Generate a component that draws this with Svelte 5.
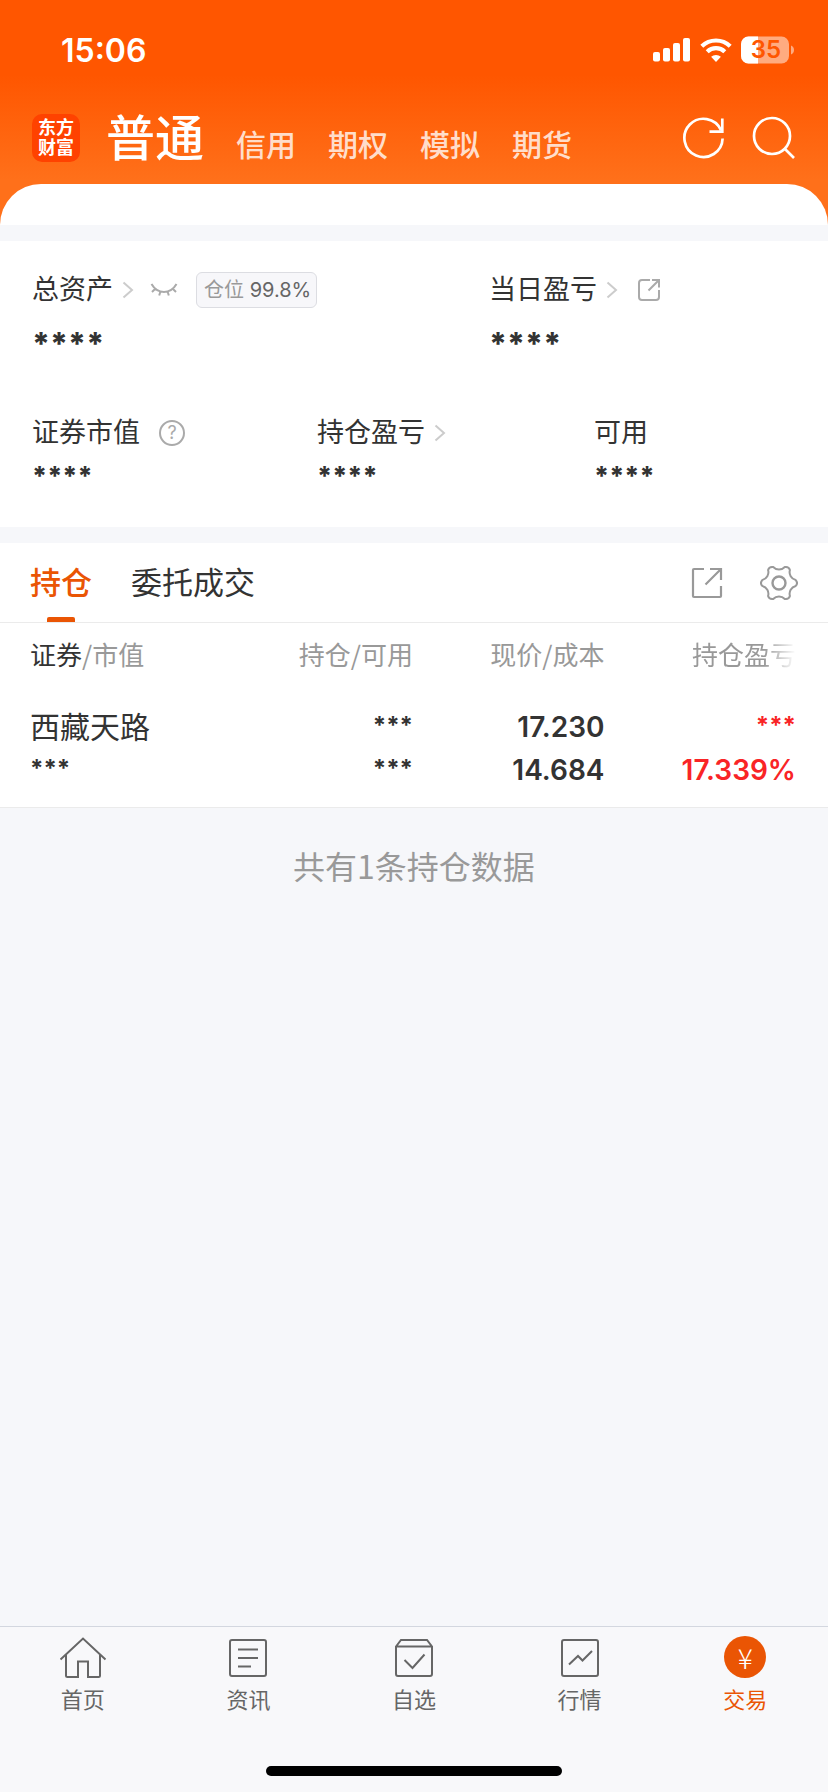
<script>
    const markets = ["信用", "期权", "模拟", "期货"];

    const columns = ["证券/市值", "持仓/可用", "现价/成本"];

    const holdings = [
        {
            name: "西藏天路",
            value: "***",
            amount: "***",
            available: "***",
            price: "17.230",
            cost: "14.684",
            profit: "***",
            profitRate: "17.339%"
        }
    ];

    const navItems = [
        { id: "home", label: "首页" },
        { id: "news", label: "资讯" },
        { id: "watch", label: "自选" },
        { id: "quotes", label: "行情" },
        { id: "trade", label: "交易" }
    ];

    let activeTab = $state("holdings");
    let activeNav = $state("trade");

    // six teeth with a shallow round valley between each pair
    function gearPath(c, r) {
        let d = "";
        for (let i = 0; i < 6; i++) {
            const points = [i * 60 - 10, i * 60 + 10].map((deg) => {
                const a = deg * Math.PI / 180;
                return `${(c + r * Math.cos(a)).toFixed(2)} ${(c + r * Math.sin(a)).toFixed(2)}`;
            });
            d += i === 0 ? `M${points[0]}` : `A8 8 0 0 0 ${points[0]}`;
            d += `A4.5 4.5 0 0 1 ${points[1]}`;
        }
        const a = -10 * Math.PI / 180;
        return d + `A8 8 0 0 0 ${(c + r * Math.cos(a)).toFixed(2)} ${(c + r * Math.sin(a)).toFixed(2)}Z`;
    }
</script>

{#snippet chevron()}
    <svg class="chevron" width="12" height="18" viewBox="0 0 12 18"><path d="M1.500 1.500L10 9l-8.500 7.500" /></svg>
{/snippet}

{#snippet cell(text)}
    <div class:masked={text === "***"}>{text}</div>
{/snippet}

<div class="app">
    <header>
        <div class="status">
            <span class="time">15:06</span>
            <div class="status-icons">
                <svg width="38" height="24" viewBox="0 0 38 24" fill="#fff">
                    <rect x="0" y="14" width="7" height="9.500" rx="2" />
                    <rect x="10" y="10" width="7" height="13.500" rx="2" />
                    <rect x="20" y="5" width="7" height="18.500" rx="2" />
                    <rect x="30" y="0" width="7" height="23.500" rx="2" />
                </svg>
                <svg width="32" height="24" viewBox="0 0 32 24">
                    <path d="M1.800 8.200a20.500 20.500 0 0 1 28.400 0M7.200 13.800a12.600 12.600 0 0 1 17.600 0" fill="none" stroke="#fff" stroke-width="4.200" />
                    <path d="M16 24l-4.900-5.200a7.200 7.200 0 0 1 9.800 0z" fill="#fff" />
                </svg>
                <div class="battery">
                    <svg width="54" height="28" viewBox="0 0 54 28">
                        <rect x="0" y="0.500" width="48" height="27" rx="7.500" fill="#fff" fill-opacity="0.500" />
                        <path d="M17 .5H7.500A7.500 7.500 0 0 0 0 8v12a7.500 7.500 0 0 0 7.500 7.500H17z" fill="#fff" />
                        <path d="M50 9.500c4 1.500 4 7.500 0 9z" fill="#fff" fill-opacity="0.500" />
                    </svg>
                    <span>35</span>
                </div>
            </div>
        </div>
        <div class="topbar">
            <a class="logo" href="#home"><span>东方</span><span>财富</span></a>
            <nav class="markets">
                <a class="current" href="#normal">普通</a>
                {#each markets as market}
                    <a href="#{market}">{market}</a>
                {/each}
            </nav>
            <button class="icon-button" aria-label="刷新">
                <svg width="44" height="44" viewBox="0 0 44 44" fill="none" stroke="#fff" stroke-width="2.700">
                    <path d="M40.600 22.500A19.100 19.100 0 1 1 38.900 14M40.300 2.500v13.200H27.500" />
                </svg>
            </button>
            <button class="icon-button" aria-label="搜索">
                <svg width="44" height="44" viewBox="0 0 44 44" fill="none" stroke="#fff" stroke-width="2.700">
                    <circle cx="20" cy="20" r="18" />
                    <path d="M33 33l9 9" />
                </svg>
            </button>
        </div>
        <div class="sheet"></div>
    </header>

    <section class="summary">
        <div class="row totals">
            <div class="item">
                <div class="label">
                    <a href="#assets">总资产{@render chevron()}</a>
                    <button class="eye" aria-label="显示金额">
                        <svg width="28" height="16" viewBox="0 0 28 16" fill="none" stroke="#aaa" stroke-width="2">
                            <path d="M1.500 2C7.500 12.500 20.500 12.500 26.500 2M5.500 6.500l-3.500 3.500M10.500 9.300l-1.300 4.200M17.500 9.300l1.300 4.200M22.500 6.500l3.500 3.500" />
                        </svg>
                    </button>
                    <span class="badge">仓位 <b>99.8%</b></span>
                </div>
                <div class="value">****</div>
            </div>
            <div class="item">
                <div class="label">
                    <a href="#today">当日盈亏{@render chevron()}</a>
                    <button class="share" aria-label="分享当日盈亏">
                        <svg width="24" height="24" viewBox="0 0 24 24" fill="none" stroke="#aaa" stroke-width="2">
                            <path d="M13 2H5a3 3 0 0 0-3 3v14a3 3 0 0 0 3 3h14a3 3 0 0 0 3-3v-7M15 2h7v7.500M22 2L11.500 12.500" />
                        </svg>
                    </button>
                </div>
                <div class="value">****</div>
            </div>
        </div>
        <div class="row details">
            <div class="item">
                <div class="label">证券市值<button class="help" aria-label="说明">?</button></div>
                <div class="value">****</div>
            </div>
            <div class="item">
                <div class="label"><a href="#profit">持仓盈亏{@render chevron()}</a></div>
                <div class="value">****</div>
            </div>
            <div class="item">
                <div class="label">可用</div>
                <div class="value">****</div>
            </div>
        </div>
    </section>

    <main>
        <div class="tabs">
            <button class="tab" class:active={activeTab === "holdings"} onclick={() => activeTab = "holdings"}>持仓</button>
            <button class="tab" class:active={activeTab === "orders"} onclick={() => activeTab = "orders"}>委托成交</button>
            <div class="tools">
                <button aria-label="分享持仓">
                    <svg width="32" height="32" viewBox="0 0 32 32" fill="none" stroke="#999" stroke-width="2.200">
                        <path d="M13 2H3a1 1 0 0 0-1 1v26a1 1 0 0 0 1 1h26a1 1 0 0 0 1-1V19M19 2h11v11M30 2L14.500 17.500" />
                    </svg>
                </button>
                <button aria-label="设置">
                    <svg width="38" height="38" viewBox="0 0 38 38" fill="none" stroke="#999" stroke-width="2" stroke-linejoin="round">
                        <path d={gearPath(19, 17)} />
                        <circle cx="19" cy="19" r="6.500" stroke-width="2.400" />
                    </svg>
                </button>
            </div>
        </div>
        <div class="table-wrapper">
            <table>
                <thead>
                    <tr>
                        {#each columns as column, i}
                            {@const [first, second] = column.split("/")}
                            <th scope="col"><span class:dark={i === 0}>{first}</span>/{second}</th>
                        {/each}
                        <th scope="col" class="fade">持仓盈亏</th>
                    </tr>
                </thead>
                <tbody>
                    {#each holdings as item}
                        <tr>
                            <td><div class="name">{item.name}</div>{@render cell(item.value)}</td>
                            <td>{@render cell(item.amount)}{@render cell(item.available)}</td>
                            <td>{@render cell(item.price)}{@render cell(item.cost)}</td>
                            <td class="up">{@render cell(item.profit)}{@render cell(item.profitRate)}</td>
                        </tr>
                    {/each}
                </tbody>
            </table>
        </div>
        <p class="count">共有{holdings.length}条持仓数据</p>
    </main>

    <footer>
        <nav class="bottom-nav">
            {#each navItems as item}
                <a href="#{item.id}" class:active={activeNav === item.id} onclick={() => activeNav = item.id}>
                    {#if item.id === "trade"}
                        <span class="coin">¥</span>
                    {:else}
                        <svg width="48" height="44" viewBox="0 0 48 44" fill="none" stroke="currentColor" stroke-width="2">
                            {#if item.id === "home"}
                                <path d="M1.500 23.500L24 2.500l22.500 21M7 19v20.500a1.500 1.500 0 0 0 1.500 1.500H19V25.500h10V41h10.500a1.500 1.500 0 0 0 1.500-1.500V19" />
                            {:else if item.id === "news"}
                                <rect x="6" y="4" width="36" height="36" rx="2" />
                                <path d="M14 13.500h20M14 22h20M14 30.500h13" />
                            {:else if item.id === "watch"}
                                <path d="M6 10.500L11 4h26l5 6.500V38a2 2 0 0 1-2 2H8a2 2 0 0 1-2-2zM6 10.500h36M14.500 24l8 8 12-13.500" />
                            {:else}
                                <rect x="6" y="4" width="36" height="36" rx="2" />
                                <path d="M13 28.500l9-8.500 4.500 4.500 9.500-9.500" />
                            {/if}
                        </svg>
                    {/if}
                    <span class="nav-label">{item.label}</span>
                </a>
            {/each}
        </nav>
        <div class="home-indicator"></div>
    </footer>
</div>

<style>
    :global(body) {
        margin: 0;
        background: #f6f7fa;
    }

    .app {
        display: flex;
        flex-direction: column;
        min-height: 100vh;
        font-family: Inter, "Noto Sans CJK SC", sans-serif;
        color: #333;
    }

    a {
        color: inherit;
        text-decoration: none;
    }

    button {
        display: flex;
        padding: 0;
        border: none;
        background: none;
        color: inherit;
        font: inherit;
        cursor: pointer;
    }

    svg {
        display: block;
        flex: none;
    }

    header {
        background: linear-gradient(#ff5600 75px, #ff701a 180px);
        color: #fff;
    }

    .status {
        display: flex;
        align-items: center;
        justify-content: space-between;
        height: 100px;
        padding: 0 33px 0 61px;
    }

    .time {
        font-size: 32px;
        font-weight: 600;
    }

    .status-icons {
        display: flex;
        align-items: center;
        gap: 9px;
    }

    .battery {
        position: relative;
    }

    .battery span {
        position: absolute;
        top: 0;
        left: 0;
        width: 50px;
        color: #ff5600;
        font-size: 24px;
        font-weight: 600;
        line-height: 28px;
        text-align: center;
    }

    .topbar {
        display: flex;
        align-items: center;
        gap: 26px;
        height: 76px;
        padding: 0 32px 8px;
    }

    .logo {
        display: flex;
        flex-direction: column;
        align-items: center;
        justify-content: center;
        width: 48px;
        height: 48px;
        border-radius: 10px;
        background: #ff4200;
        font-size: 18px;
        font-weight: 700;
        line-height: 20px;
    }

    .markets {
        display: flex;
        flex: 1;
        align-items: baseline;
        gap: 32px;
        padding-top: 8px;
        font-size: 30px;
        font-weight: 500;
        line-height: 64px;
        color: rgba(255, 255, 255, .8);
    }

    .markets .current {
        color: #fff;
        font-size: 49px;
    }

    .sheet {
        height: 41px;
        border-radius: 42px 42px 0 0;
        background: #fff;
    }

    .summary {
        margin: 16px 0;
        padding: 29px 32px 33px;
        background: #fff;
    }

    .row {
        display: grid;
    }

    .totals {
        grid-template-columns: 457fr 307fr;
        margin-bottom: 49px;
    }

    .details {
        grid-template-columns: 285fr 277fr 202fr;
    }

    .label {
        display: flex;
        align-items: center;
        height: 40px;
        font-size: 27px;
        line-height: 40px;
        white-space: nowrap;
    }

    .label a {
        display: flex;
        align-items: center;
        gap: 9px;
    }

    .chevron {
        fill: none;
        stroke: #ccc;
        stroke-width: 2;
    }

    .eye {
        margin: 0 18px 0 16px;
    }

    .badge {
        padding: 0 5px 0 7px;
        border: 1px solid #dcdde2;
        border-radius: 6px;
        background: #f7f7fa;
        color: #999;
        font-size: 20px;
        line-height: 34px;
    }

    .badge b {
        color: #666;
        font-weight: 400;
    }

    .share {
        margin-left: 19px;
    }

    .help {
        align-items: center;
        justify-content: center;
        width: 26px;
        height: 26px;
        margin-left: 19px;
        border: 2px solid #aaa;
        border-radius: 50%;
        color: #aaa;
        font-size: 18px;
        line-height: 22px;
    }

    .value {
        font-weight: 800;
    }

    .totals .value {
        margin-top: 14px;
        font-size: 31px;
        line-height: 40px;
    }

    .details .value {
        margin-top: 5px;
        font-size: 26px;
        line-height: 36px;
    }

    main {
        flex: 1;
    }

    .tabs {
        display: flex;
        align-items: stretch;
        gap: 39px;
        height: 79px;
        padding: 0 30px;
        border-bottom: 1px solid #ebebeb;
        background: #fff;
    }

    .tab {
        position: relative;
        align-items: center;
        font-size: 31px;
        line-height: 40px;
    }

    .tab.active {
        color: #ea5504;
        font-weight: 500;
    }

    .tab.active::after {
        content: "";
        position: absolute;
        bottom: 0;
        left: 50%;
        width: 28px;
        height: 5px;
        margin-left: -14px;
        border-radius: 2px 2px 0 0;
        background: #ea5504;
    }

    .tools {
        display: flex;
        align-items: center;
        gap: 37px;
        margin-left: auto;
    }

    .table-wrapper {
        padding: 0 32px 15px 30px;
        border-bottom: 1px solid #ebebeb;
        background: #fff;
    }

    table {
        width: 100%;
        border-collapse: collapse;
        table-layout: fixed;
    }

    th,
    td {
        padding: 0;
        text-align: right;
        white-space: nowrap;
    }

    th:first-child,
    td:first-child {
        text-align: left;
    }

    th {
        height: 60px;
        padding-bottom: 4px;
        color: #999;
        font-family: "Noto Sans CJK SC", sans-serif;
        font-size: 26px;
        font-weight: 400;
    }

    .dark {
        color: #333;
    }

    .fade {
        mask-image: linear-gradient(to left, transparent, #000 32px);
    }

    td {
        padding-top: 19px;
        font-size: 28px;
        font-weight: 600;
        line-height: 43px;
        vertical-align: top;
    }

    .name {
        font-size: 30px;
        font-weight: 400;
    }

    .masked {
        height: 43px;
        font-size: 24px;
        font-weight: 700;
        line-height: 40px;
    }

    .up {
        color: #f92426;
    }

    .count {
        margin: 35px 0;
        color: #999;
        font-family: "Noto Sans CJK SC", sans-serif;
        font-size: 32px;
        line-height: 44px;
        text-align: center;
    }

    footer {
        border-top: 1px solid #d3d7df;
        background: #f8f8fa;
    }

    .bottom-nav {
        display: grid;
        grid-template-columns: repeat(5, 1fr);
        height: 139px;
    }

    .bottom-nav a {
        display: flex;
        flex-direction: column;
        align-items: center;
        padding-top: 9px;
        color: #666;
    }

    .bottom-nav a.active {
        color: #ea5504;
    }

    .coin {
        width: 42px;
        height: 42px;
        margin-bottom: 2px;
        border-radius: 50%;
        background: #ea5504;
        color: #fff;
        font-family: "Noto Sans CJK SC", sans-serif;
        font-size: 28px;
        font-weight: 300;
        line-height: 42px;
        text-align: center;
    }

    .nav-label {
        margin-top: 6px;
        font-size: 22px;
        line-height: 28px;
    }

    .home-indicator {
        width: 296px;
        height: 10px;
        margin: 0 auto 16px;
        border-radius: 5px;
        background: #000;
    }
</style>
